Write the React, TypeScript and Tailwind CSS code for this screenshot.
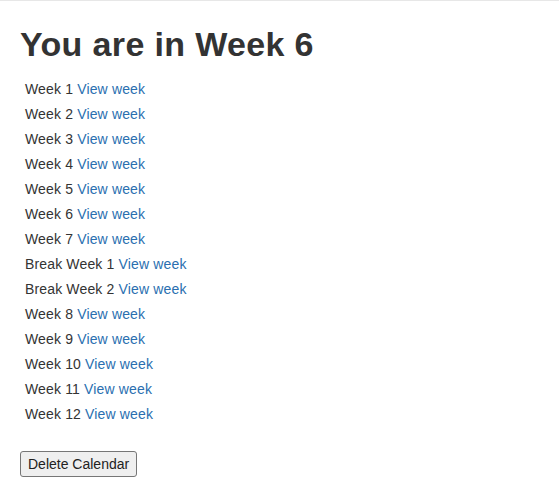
const weeks = [
  'Week 1',
  'Week 2',
  'Week 3',
  'Week 4',
  'Week 5',
  'Week 6',
  'Week 7',
  'Break Week 1',
  'Break Week 2',
  'Week 8',
  'Week 9',
  'Week 10',
  'Week 11',
  'Week 12',
];

export default function App() {
  return (
    <div className="min-h-[499px] bg-white text-[#333] text-[14px] font-['Liberation_Sans',Arial,sans-serif]">
      <div className="h-px bg-[#e7e7e7]" />
      <div className="px-[20px]">
        <h1 className="mt-[23px] mb-[13px] text-[34px] leading-[40px] font-bold tracking-[0.35px]">You are in Week 6</h1>
        <ul className="pl-[5px]">
          {weeks.map(w => (
            <li key={w} className="h-[25px] leading-[25px] tracking-[0.15px]">
              {w}{' '}
              <a href="#" className="text-[#2a6fb0]">View week</a>
            </li>
          ))}
        </ul>
        <button className="mt-[24px] h-[26px] px-[7px] border border-[#767676] rounded-[3px] bg-[#efefef] text-[14px] text-[#222]">
          Delete Calendar
        </button>
      </div>
    </div>
  );
}
